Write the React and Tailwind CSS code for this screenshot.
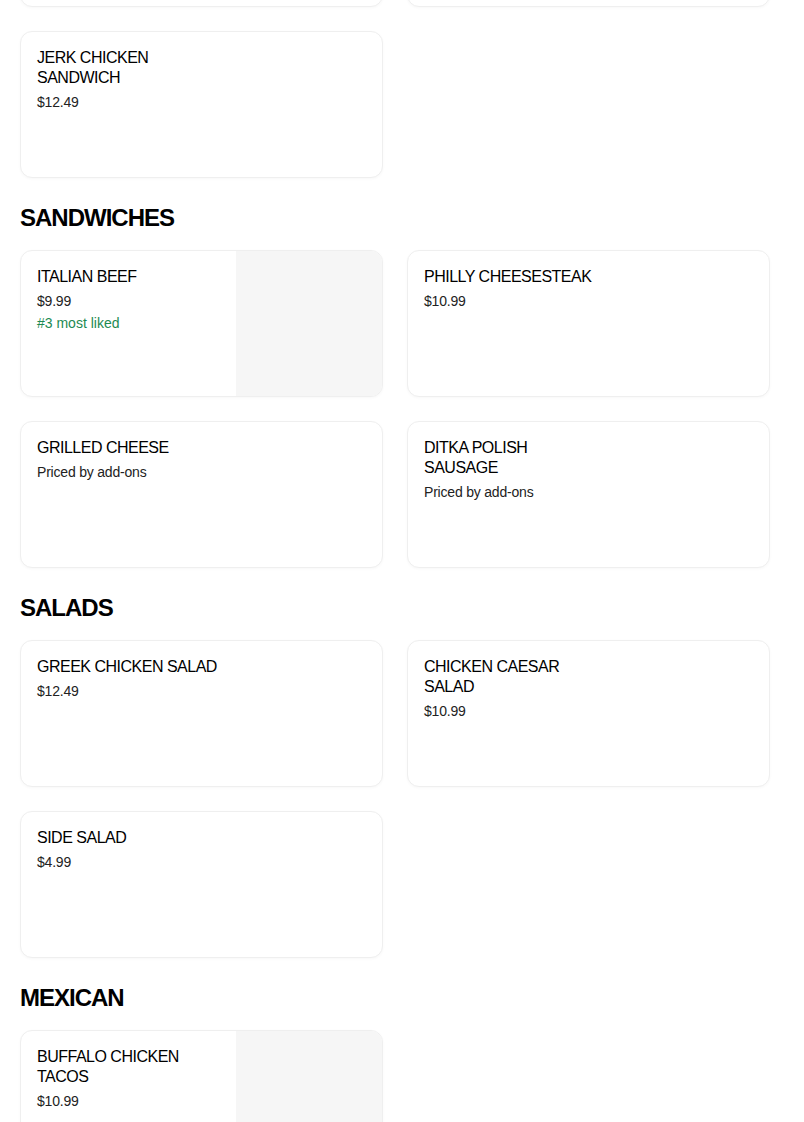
import React from 'react';

const sections = [
  {
    title: null,
    items: [
      { name: 'BBQ CHICKEN SANDWICH', price: '$12.49' },
      { name: 'CHICKEN CLUB', price: '$12.49' },
      { name: 'JERK CHICKEN SANDWICH', price: '$12.49' },
    ],
  },
  {
    title: 'SANDWICHES',
    items: [
      { name: 'ITALIAN BEEF', price: '$9.99', badge: '#3 most liked', image: true },
      { name: 'PHILLY CHEESESTEAK', price: '$10.99' },
      { name: 'GRILLED CHEESE', price: 'Priced by add-ons' },
      { name: 'DITKA POLISH\nSAUSAGE', price: 'Priced by add-ons' },
    ],
  },
  {
    title: 'SALADS',
    items: [
      { name: 'GREEK CHICKEN SALAD', price: '$12.49' },
      { name: 'CHICKEN CAESAR\nSALAD', price: '$10.99' },
      { name: 'SIDE SALAD', price: '$4.99' },
    ],
  },
  {
    title: 'MEXICAN',
    items: [{ name: 'BUFFALO CHICKEN\nTACOS', price: '$10.99', image: true }],
  },
];

function MenuCard({ item }) {
  return (
    <div className="flex h-[147px] overflow-hidden rounded-xl border border-[#efefef] bg-white shadow-[0_1px_3px_rgba(0,0,0,0.03)]">
      <div className="flex-1 min-w-0 px-4 pt-4">
        <div className="whitespace-pre-line text-[16px] leading-5 font-medium tracking-[-0.5px] text-black">
          {item.name}
        </div>
        <div className="mt-1 text-[14px] leading-5 text-[#222] tracking-[-0.2px]">{item.price}</div>
        {item.badge && (
          <div className="mt-[2px] text-[14px] leading-5 font-medium text-[#1d8a52]">{item.badge}</div>
        )}
      </div>
      <div className={item.image ? 'w-[146px] shrink-0 bg-[#f6f6f6]' : 'w-[146px] shrink-0'} />
    </div>
  );
}

export default function App() {
  return (
    <div
      className="min-h-[1122px] overflow-hidden bg-white"
      style={{ fontFamily: '"Liberation Sans", Arial, sans-serif' }}
    >
      <div className="ml-5 w-[750px] -mt-[140px]">
        {sections.map((section, i) => (
          <div key={i}>
            {section.title && (
              <h2 className="mt-6 mb-4 text-[24px] leading-8 font-bold tracking-[-1px] text-black">
                {section.title}
              </h2>
            )}
            <div className="grid grid-cols-2 gap-6">
              {section.items.map((item) => (
                <MenuCard key={item.name} item={item} />
              ))}
            </div>
          </div>
        ))}
      </div>
    </div>
  );
}
